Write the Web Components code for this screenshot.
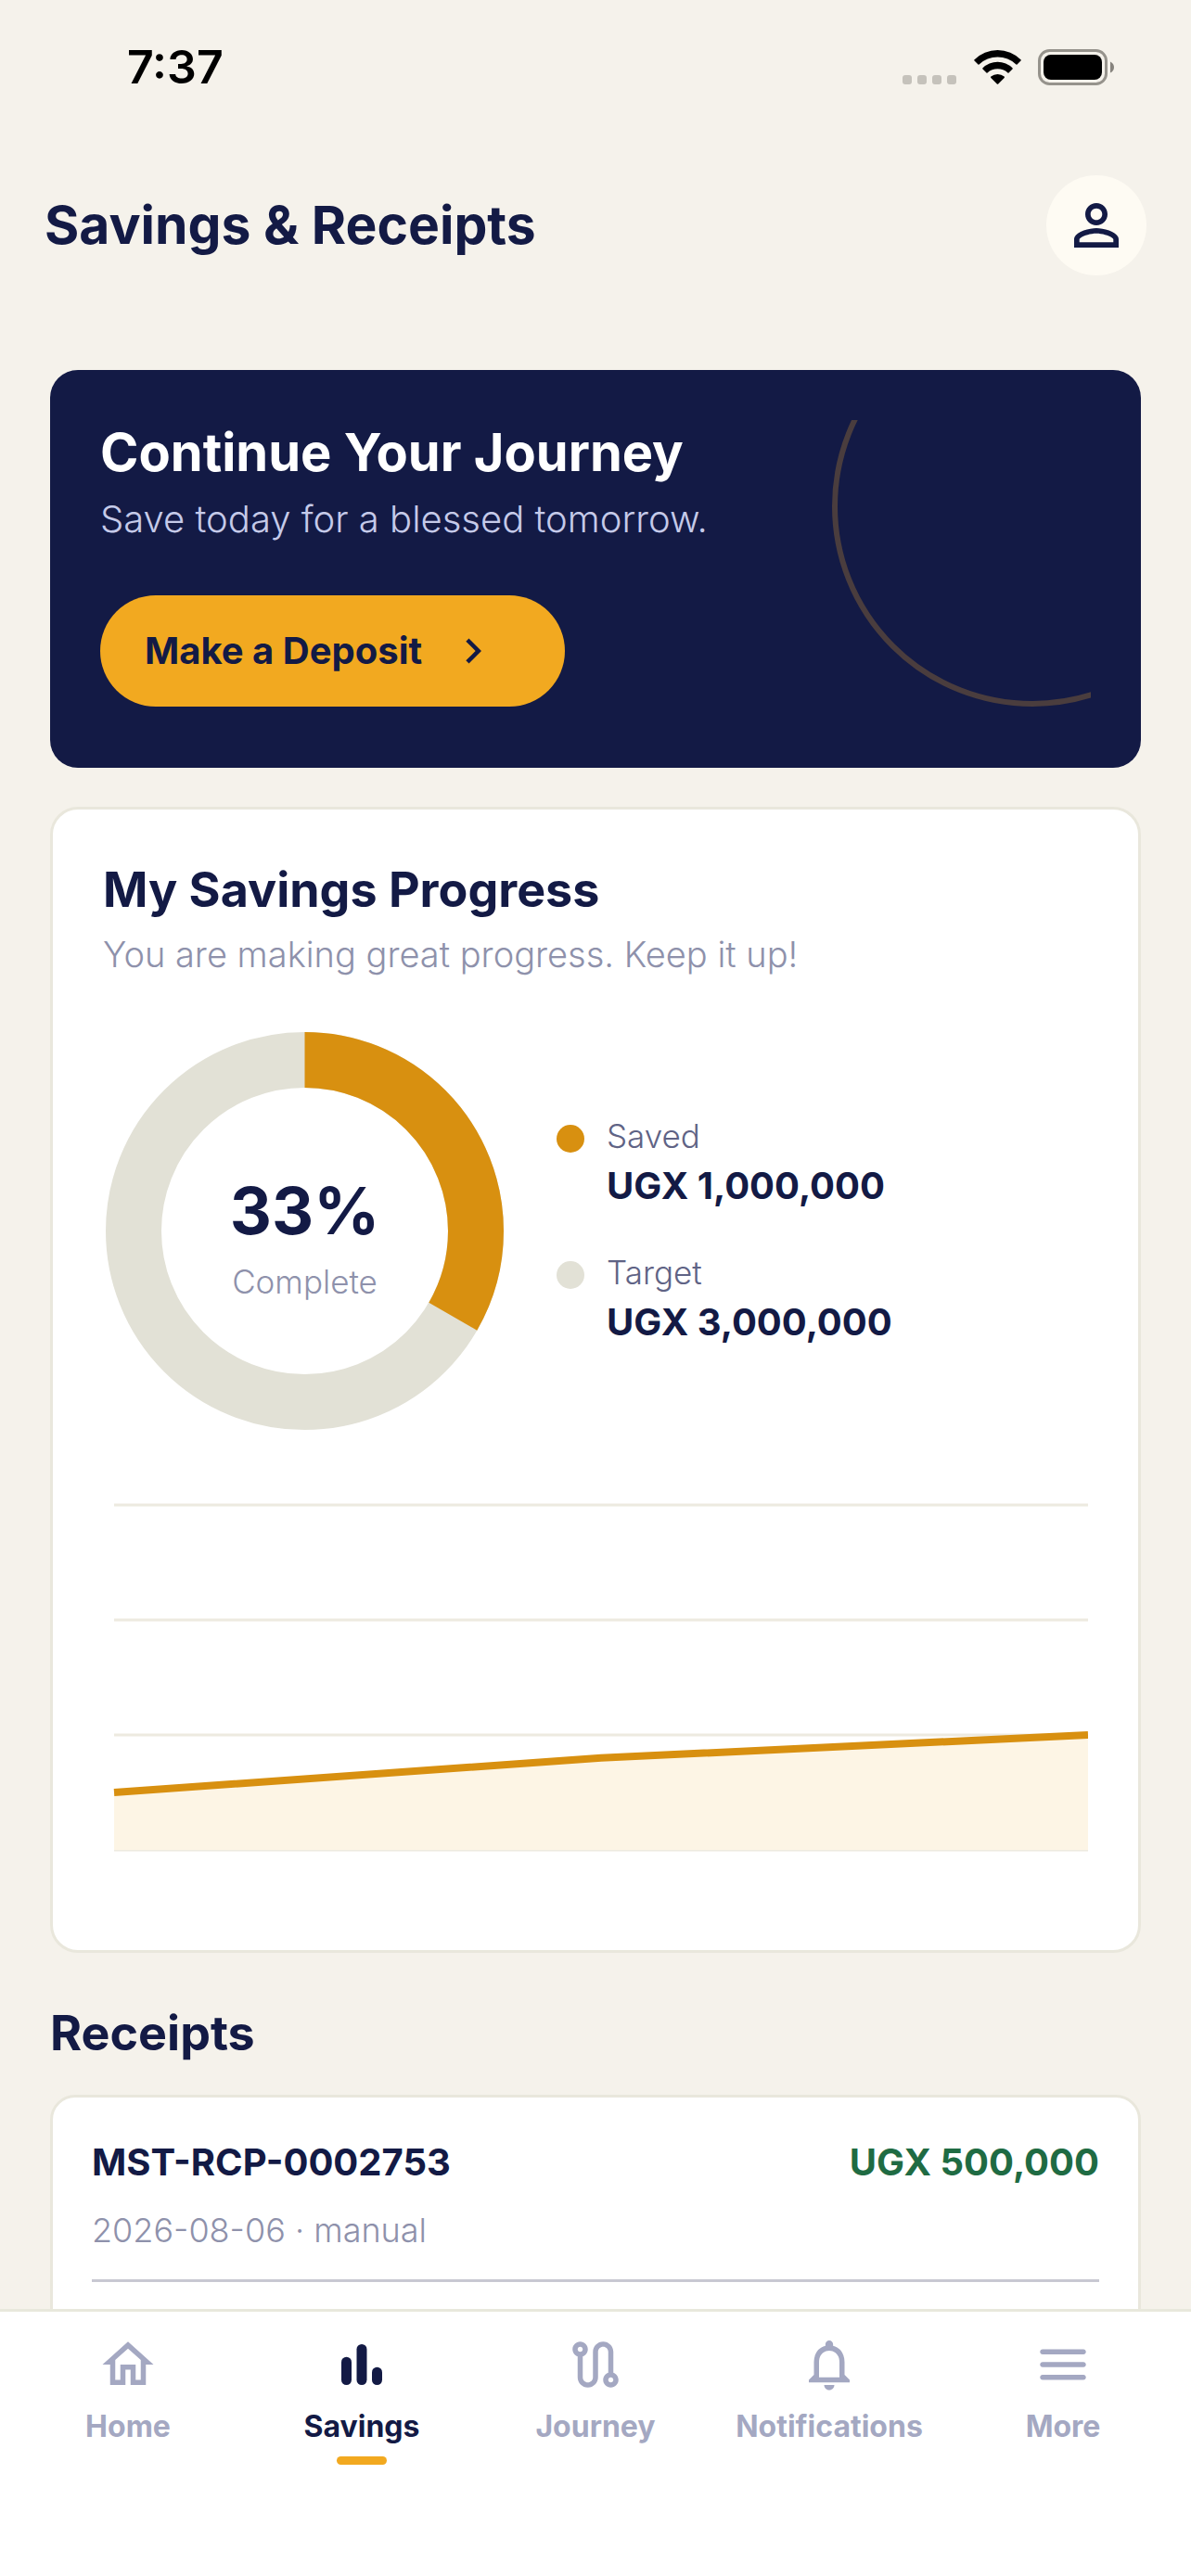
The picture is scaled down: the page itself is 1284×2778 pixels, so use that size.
<!DOCTYPE html>
<html lang="en">
<head>
<meta charset="utf-8">
<meta name="viewport" content="width=device-width, initial-scale=1">
<title>Savings &amp; Receipts</title>
<style>
  :root {
    --bg: #f5f2eb;
    --navy: #131a45;
    --amber: #f2a920;
    --gold: #d89010;
    --track: #e2e1d6;
    --line: #e9e7dc;
    --muted: #8e91ab;
    --label: #5f6385;
    --idle: #a4a8c2;
    --green: #1f6b43;
  }
  body {
    margin: 0;
    background: var(--bg);
    color: var(--navy);
    font-family: Inter, "Liberation Sans", sans-serif;
  }
</style>
</head>
<body>

<app-shell>
  <status-bar slot="top" time="7:37"></status-bar>
  <page-header slot="top">Savings &amp; Receipts</page-header>

  <deposit-banner>
    <span slot="title">Continue Your Journey</span>
    <span slot="text">Save today for a blessed tomorrow.</span>
    <span slot="action">Make a Deposit</span>
  </deposit-banner>

  <savings-progress percent="33">
    <span slot="title">My Savings Progress</span>
    <span slot="text">You are making great progress. Keep it up!</span>
    <legend-item slot="legend" color="var(--gold)" label="Saved">UGX 1,000,000</legend-item>
    <legend-item slot="legend" color="var(--track)" label="Target">UGX 3,000,000</legend-item>
    <trend-chart slot="chart" values="0.5,0.8,1" max="3"></trend-chart>
  </savings-progress>

  <receipt-list heading="Receipts">
    <receipt-row number="MST-RCP-0002753" amount="UGX 500,000">2026-08-06 · manual</receipt-row>
  </receipt-list>

  <tab-bar slot="bottom">
    <tab-item icon="home" href="#home">Home</tab-item>
    <tab-item icon="bars" href="#savings" active>Savings</tab-item>
    <tab-item icon="route" href="#journey">Journey</tab-item>
    <tab-item icon="bell" href="#notifications">Notifications</tab-item>
    <tab-item icon="menu" href="#more">More</tab-item>
  </tab-bar>
</app-shell>

<script>
  // 24x24 icon paths
  const ICONS = {
    home: '<path d="M12 5.69l5 4.5V18h-2v-6H9v6H7v-7.81l5-4.5M12 3L2 12h3v8h6v-6h2v6h6v-8h3L12 3z"/>',
    bars: '<rect x="4" y="9" width="4" height="11" rx="2"/><rect x="10" y="4" width="4" height="16" rx="2"/><rect x="16" y="13" width="4" height="7" rx="2"/>',
    route: '<path fill-rule="evenodd" d="M19 15.18V7c0-2.21-1.79-4-4-4s-4 1.79-4 4v10c0 1.1-.9 2-2 2s-2-.9-2-2V8.82C8.16 8.4 9 7.3 9 6c0-1.66-1.34-3-3-3S3 4.34 3 6c0 1.3.84 2.4 2 2.82V17c0 2.21 1.79 4 4 4s4-1.79 4-4V7c0-1.1.9-2 2-2s2 .9 2 2v8.18c-1.16.41-2 1.51-2 2.82 0 1.66 1.34 3 3 3s3-1.34 3-3c0-1.3-.84-2.4-2-2.82zM6 7c-.55 0-1-.45-1-1s.45-1 1-1 1 .45 1 1-.45 1-1 1zm12 12c-.55 0-1-.45-1-1s.45-1 1-1 1 .45 1 1-.45 1-1 1z"/>',
    bell: '<path d="M12 22c1.1 0 2-.9 2-2h-4c0 1.1.9 2 2 2zm6-6v-5c0-3.07-1.63-5.64-4.5-6.32V4c0-.83-.67-1.5-1.5-1.5s-1.5.67-1.5 1.5v.68C7.64 5.36 6 7.92 6 11v5l-2 2v1h16v-1l-2-2zm-2 1H8v-6c0-2.48 1.51-4.5 4-4.5s4 2.02 4 4.5v6z"/>',
    menu: '<path d="M4 18h16c.55 0 1-.45 1-1s-.45-1-1-1H4c-.55 0-1 .45-1 1s.45 1 1 1zm0-5h16c.55 0 1-.45 1-1s-.45-1-1-1H4c-.55 0-1 .45-1 1s.45 1 1 1zM3 7c0 .55.45 1 1 1h16c.55 0 1-.45 1-1s-.45-1-1-1H4c-.55 0-1 .45-1 1z"/>',
    person: '<path d="M12 5.9c1.16 0 2.1.94 2.1 2.1s-.94 2.1-2.1 2.1S9.9 9.16 9.9 8s.94-2.1 2.1-2.1m0 9c2.97 0 6.1 1.46 6.1 2.1v1.1H5.9V17c0-.64 3.13-2.1 6.1-2.1M12 4C9.79 4 8 5.79 8 8s1.79 4 4 4 4-1.79 4-4-1.79-4-4-4zm0 9c-2.67 0-8 1.34-8 4v3h16v-3c0-2.66-5.33-4-8-4z"/>',
    chevron: '<path d="M10 6L8.59 7.41 13.17 12l-4.58 4.59L10 18l6-6z"/>'
  };

  function icon(name, size) {
    return `<svg width="${size}" height="${size}" viewBox="0 0 24 24" fill="currentColor" aria-hidden="true">${ICONS[name]}</svg>`;
  }

  class BaseElement extends HTMLElement {
    connectedCallback() {
      if (this.shadowRoot) return;
      this.attachShadow({ mode: 'open' }).innerHTML = this.render();
    }
  }

  // column of fixed top, scrolling middle and bottom bar
  customElements.define('app-shell', class extends BaseElement {
    render() {
      return `
        <style>
          :host { display: flex; flex-direction: column; height: 100vh; }
          main { flex: 1; min-height: 0; overflow-y: auto; scrollbar-width: none; padding: 0 54px; }
        </style>
        <slot name="top"></slot>
        <main><slot></slot></main>
        <slot name="bottom"></slot>`;
    }
  });

  customElements.define('status-bar', class extends BaseElement {
    render() {
      return `
        <style>
          :host { display: flex; justify-content: space-between; align-items: center; flex: none;
            height: 144px; padding: 0 82px 0 137px; color: #000; }
          .time { font-size: 50px; line-height: 60px; font-weight: 600; }
          .icons { display: flex; align-items: flex-end; gap: 18px; }
          svg { display: block; }
        </style>
        <span class="time">${this.getAttribute('time')}</span>
        <div class="icons">
          <svg width="59" height="38" viewBox="0 0 59 38" fill="#c5c2bb" aria-hidden="true">
            <rect y="27" width="10" height="10" rx="3"/><rect x="16" y="27" width="10" height="10" rx="3"/>
            <rect x="32" y="27" width="10" height="10" rx="3"/><rect x="48" y="27" width="10" height="10" rx="3"/>
          </svg>
          <svg width="51" height="38" viewBox="0 0 51 38" aria-hidden="true">
            <path d="M.3 10.5A35.5 35.5 0 0 1 50.7 10.5Q51 11 50.5 11.5L46.5 15.5Q46 16 45.5 15.5A29 29 0 0 0 5.5 15.5Q5 16 4.5 15.5L.5 11.5Q0 11 .3 10.5Z"/>
            <path d="M9.3 19.5A23 23 0 0 1 41.7 19.5Q42 20 41.5 20.5L37.5 24.5Q37 25 36.5 24.5A16.5 16.5 0 0 0 14.5 24.5Q14 25 13.5 24.5L9.5 20.5Q9 20 9.3 19.5Z"/>
            <path d="M18.3 28.5A11.5 11.5 0 0 1 32.7 28.5Q33.3 29.3 32.7 30L26.2 36.5Q25.5 37.2 24.8 36.5L18.3 30Q17.7 29.3 18.3 28.5Z"/>
          </svg>
          <svg width="83" height="39" viewBox="0 0 83 39" aria-hidden="true">
            <rect x="1.5" y="1.5" width="72" height="36" rx="11" fill="none" stroke="#96938c" stroke-width="3"/>
            <rect x="6" y="6" width="63" height="27" rx="8"/>
            <path d="M78 13.5Q82 15.5 82 19.5T78 25.5Z" fill="#86837d"/>
          </svg>
        </div>`;
    }
  });

  customElements.define('page-header', class extends BaseElement {
    render() {
      return `
        <style>
          :host { display: flex; justify-content: space-between; align-items: center; flex: none;
            padding: 45px 48px 102px; }
          h1 { margin: 0; font-size: 57px; line-height: 66px; font-weight: 700; }
          button { display: grid; place-items: center; width: 108px; height: 108px; padding: 0; border: 0;
            border-radius: 50%; background: #fefbf3; color: inherit; }
        </style>
        <h1><slot></slot></h1>
        <button type="button" aria-label="Profile">${icon('person', 72)}</button>`;
    }
  });

  customElements.define('deposit-banner', class extends BaseElement {
    render() {
      return `
        <style>
          :host { display: flex; justify-content: space-between; padding: 54px; border-radius: 30px;
            background: var(--navy); color: #fff; }
          h2 { margin: 0 0 9px; font-size: 56px; line-height: 70px; font-weight: 700; }
          p { margin: 0 0 54px; font-size: 40px; line-height: 56px; font-weight: 300; color: #c5cae9; }
          button { display: flex; align-items: center; gap: 28px; height: 120px; padding: 0 72px 0 48px;
            border: 0; border-radius: 60px; background: var(--amber); color: var(--navy);
            font-family: inherit; font-size: 40px; line-height: 48px; font-weight: 700; }
          .arc { flex: none; display: block; }
        </style>
        <div>
          <h2><slot name="title"></slot></h2>
          <p><slot name="text"></slot></p>
          <button type="button"><slot name="action"></slot>${icon('chevron', 54)}</button>
        </div>
        <svg class="arc" width="279" height="321" viewBox="0 0 279 321" aria-hidden="true">
          <circle cx="216" cy="93" r="213" fill="none" stroke="#4a3d3e" stroke-width="6"/>
        </svg>`;
    }
  });

  customElements.define('savings-progress', class extends BaseElement {
    render() {
      const percent = Number(this.getAttribute('percent'));
      return `
        <style>
          :host { display: block; margin-top: 42px; padding: 54px; border: 3px solid var(--line);
            border-radius: 30px; background: #fff; }
          h2 { margin: 0 0 9px; font-size: 52px; line-height: 66px; font-weight: 700; }
          p { margin: 0 0 54px; font-size: 38px; line-height: 54px; font-weight: 300; color: var(--muted); }
          .row { display: flex; align-items: center; gap: 54px; margin-bottom: 54px; }
          .donut { display: grid; place-items: center; }
          .donut > * { grid-area: 1 / 1; }
          .value { text-align: center; }
          .value strong { display: block; font-size: 70px; line-height: 108px; font-weight: 700; }
          .value span { display: block; font-size: 35px; line-height: 44px; font-weight: 300; color: var(--muted); }
          .legend { display: grid; gap: 45px; }
        </style>
        <h2><slot name="title"></slot></h2>
        <p><slot name="text"></slot></p>
        <div class="row">
          <div class="donut">
            <svg width="435" height="435" viewBox="0 0 435 435" fill="none" stroke-width="60" aria-hidden="true">
              <circle cx="217.5" cy="217.5" r="184.5" stroke="var(--track)"/>
              <circle cx="217.5" cy="217.5" r="184.5" stroke="var(--gold)" pathLength="300"
                stroke-dasharray="${percent * 3 + 1} 300" transform="rotate(-90 217.5 217.5)"/>
            </svg>
            <div class="value"><strong>${percent}%</strong><span>Complete</span></div>
          </div>
          <div class="legend"><slot name="legend"></slot></div>
        </div>
        <slot name="chart"></slot>`;
    }
  });

  customElements.define('legend-item', class extends BaseElement {
    render() {
      return `
        <style>
          :host { display: flex; gap: 24px; }
          i { flex: none; width: 30px; height: 30px; margin-top: 10px; border-radius: 50%; }
          .label { margin-bottom: 6px; font-size: 35px; line-height: 44px; font-weight: 300; color: var(--label); }
          .amount { font-size: 40px; line-height: 52px; font-weight: 700; }
        </style>
        <i style="background: ${this.getAttribute('color')}"></i>
        <div>
          <div class="label">${this.getAttribute('label')}</div>
          <div class="amount"><slot></slot></div>
        </div>`;
    }
  });

  customElements.define('trend-chart', class extends BaseElement {
    render() {
      const values = this.getAttribute('values').split(',').map(Number);
      const max = Number(this.getAttribute('max'));
      const left = 12, right = 1062, top = 24, bottom = 396;
      const points = values.map((v, i) => [
        left + (right - left) * i / (values.length - 1),
        bottom - (bottom - top) * v / max
      ].join(' '));
      let grid = '';
      for (let i = 0; i <= max; i++) {
        const y = top + (bottom - top) * i / max;
        grid += `<path d="M${left} ${y}H${right}"/>`;
      }
      return `
        <style>
          :host { display: block; }
          svg { display: block; width: 100%; height: auto; }
        </style>
        <svg viewBox="0 0 1062 450" fill="none" role="img" aria-label="Savings over time">
          <g stroke="#edeae0" stroke-width="3">${grid}</g>
          <path d="M${left} ${bottom}L${points.join('L')}V${bottom}Z" fill="#fdf5e5"/>
          <path d="M${points.join('L')}" stroke="var(--gold)" stroke-width="8"/>
        </svg>`;
    }
  });

  customElements.define('receipt-list', class extends BaseElement {
    render() {
      return `
        <style>
          :host { display: block; }
          h2 { margin: 54px 0 33px; font-size: 52px; line-height: 66px; font-weight: 700; }
          .card { padding: 42px 42px 96px; border: 3px solid var(--line); border-radius: 27px; background: #fff; }
        </style>
        <h2>${this.getAttribute('heading')}</h2>
        <div class="card"><slot></slot></div>`;
    }
  });

  customElements.define('receipt-row', class extends BaseElement {
    render() {
      return `
        <style>
          :host { display: block; padding-bottom: 26px; border-bottom: 3px solid #c8c8d2; }
          .top { display: flex; justify-content: space-between; margin-bottom: 18px;
            font-size: 40px; line-height: 56px; font-weight: 700; }
          .amount { color: var(--green); }
          .meta { font-size: 36px; line-height: 54px; font-weight: 300; color: var(--muted); }
        </style>
        <div class="top">
          <span>${this.getAttribute('number')}</span>
          <span class="amount">${this.getAttribute('amount')}</span>
        </div>
        <div class="meta"><slot></slot></div>`;
    }
  });

  customElements.define('tab-bar', class extends BaseElement {
    render() {
      return `
        <style>
          :host { display: block; flex: none; border-top: 3px solid #e8e8dc; background: #fff; }
          nav { display: grid; grid-template-columns: repeat(5, 1fr); padding: 24px 12px 120px; }
        </style>
        <nav><slot></slot></nav>`;
    }
  });

  customElements.define('tab-item', class extends BaseElement {
    render() {
      const active = this.hasAttribute('active');
      return `
        <style>
          :host { display: block; color: var(--idle); }
          :host([active]) { color: var(--navy); }
          a { display: flex; flex-direction: column; align-items: center; color: inherit; text-decoration: none; }
          span { margin: 14px 0 12px; font-size: 32px; line-height: 40px; font-weight: 700; }
          i { width: 54px; height: 9px; border-radius: 5px; }
          :host([active]) i { background: var(--amber); }
        </style>
        <a href="${this.getAttribute('href')}" ${active ? 'aria-current="page"' : ''}>
          ${icon(this.getAttribute('icon'), 66)}
          <span><slot></slot></span>
          <i></i>
        </a>`;
    }
  });
</script>
</body>
</html>
